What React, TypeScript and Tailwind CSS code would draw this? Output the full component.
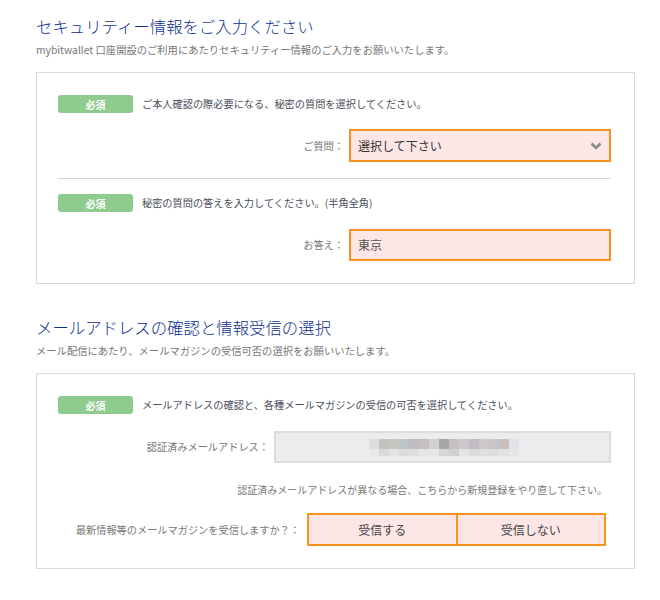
import React from 'react';

const FONT = "font-['Noto_Sans_CJK_JP','Noto_Sans',sans-serif]";

const MOSAIC_TOP = [
  '#e0dedb', '#c4c0c4', '#c8c6c0', '#bcc4c8', '#c0bcc0', '#c2bec2', '#d2d0cc', '#a8a6a8',
  '#c6c0c4', '#ccc8cc', '#c0bcc4', '#ccc8cc', '#c8c4c8', '#c9bfbd', '#dfe4e8',
];
const MOSAIC_BOTTOM = [
  '#e8e8e6', '#dad8da', '#e2e2e0', '#dcdcdc', '#dedddf', '#e6e6e4', '#e6e6e6', '#d8d6d8',
  '#cfcdd1', '#e4e4e2', '#dcdcdc', '#e0dee0', '#dcdcdc', '#e2e2e2', '#e4e6e8',
];

function Badge() {
  return (
    <span className="flex h-[18px] w-[75px] shrink-0 items-center justify-center rounded-[3px] bg-[#8fcb8e] text-[10px] font-bold text-white">
      必須
    </span>
  );
}

function RequiredRow({ text }: { text: string }) {
  return (
    <div className="flex h-[18px] items-center">
      <Badge />
      <span className="ml-[9px] text-[10.2px] leading-[16px] text-[#4a4e5a]">{text}</span>
    </div>
  );
}

function SectionHead({ title, sub }: { title: string; sub: string }) {
  return (
    <div>
      <h2 className="text-[16.4px] font-light leading-[24px] text-[#0d2f8f]">{title}</h2>
      <p className="mt-[4px] text-[10.3px] leading-[16px] text-[#777]">{sub}</p>
    </div>
  );
}

// blurred address, drawn as a mosaic
function Mosaic() {
  return (
    <svg width="150" height="17" viewBox="0 0 150 17">
      {MOSAIC_TOP.map((c, i) => (
        <rect key={`t${i}`} x={i * 10} y={0} width={10} height={10} fill={c} />
      ))}
      {MOSAIC_BOTTOM.map((c, i) => (
        <rect key={`b${i}`} x={i * 10} y={10} width={10} height={7} fill={c} />
      ))}
    </svg>
  );
}

export default function App() {
  return (
    <div className={`${FONT} min-h-[600px] w-[660px] bg-white pl-[36px] pr-[25px] pt-[14px]`}>
      <SectionHead
        title="セキュリティー情報をご入力ください"
        sub="mybitwallet 口座開設のご利用にあたりセキュリティー情報のご入力をお願いいたします。"
      />

      <div className="mt-[14px] border border-[#dadada] pb-[22px] pl-[21px] pr-[23px] pt-[22px]">
        <RequiredRow text="ご本人確認の際必要になる、秘密の質問を選択してください。" />
        <div className="mt-[16px] flex h-[33px] items-center justify-end gap-[5px]">
          <span className="text-[10.2px] text-[#777]">ご質問：</span>
          <div className="flex h-full w-[262px] items-center justify-between border-2 border-[#f7931e] bg-[#fde6e6] pl-[7px] pr-[7px]">
            <span className="text-[12px] text-[#333]">選択して下さい</span>
            <svg width="12" height="8" viewBox="0 0 12 8">
              <path d="M1.5 1.5 L6 6 L10.5 1.5" fill="none" stroke="#8a8a8a" strokeWidth="2.6" />
            </svg>
          </div>
        </div>
        <div className="mt-[16px] border-t border-[#d6d6d6]" />
        <div className="mt-[15px]">
          <RequiredRow text="秘密の質問の答えを入力してください。(半角全角)" />
        </div>
        <div className="mt-[17px] flex h-[32px] items-center justify-end gap-[5px]">
          <span className="text-[10.2px] text-[#777]">お答え：</span>
          <div className="flex h-full w-[262px] items-center border-2 border-[#f7931e] bg-[#fde6e6] pl-[7px]">
            <span className="text-[12px] text-[#555]">東京</span>
          </div>
        </div>
      </div>

      <div className="mt-[31px]">
        <SectionHead
          title="メールアドレスの確認と情報受信の選択"
          sub="メール配信にあたり、メールマガジンの受信可否の選択をお願いいたします。"
        />
      </div>

      <div className="mt-[14px] border border-[#dadada] pb-[22px] pl-[21px] pr-[23px] pt-[22px]">
        <RequiredRow text="メールアドレスの確認と、各種メールマガジンの受信の可否を選択してください。" />
        <div className="mt-[17px] flex h-[32px] items-center justify-end gap-[5px]">
          <span className="text-[10.2px] text-[#777]">認証済みメールアドレス：</span>
          <div className="flex h-full w-[337px] items-center border-2 border-[#dcdcdc] bg-[#ececec] pl-[93px]">
            <Mosaic />
          </div>
        </div>
        <p className="mr-[4px] mt-[19px] text-right text-[10px] leading-[16px] text-[#777]">
          認証済みメールアドレスが異なる場合、こちらから新規登録をやり直して下さい。
        </p>
        <div className="mr-[5px] mt-[15px] flex h-[33px] items-center justify-end gap-[7px]">
          <span className="text-[10.2px] text-[#777]">最新情報等のメールマガジンを受信しますか？：</span>
          <div className="flex h-full w-[299px] divide-x-2 divide-[#f7931e] border-2 border-[#f7931e] bg-[#fde6e6]">
            {['受信する', '受信しない'].map((t) => (
              <button key={t} className="flex flex-1 items-center justify-center text-[12px] text-[#444]">
                {t}
              </button>
            ))}
          </div>
        </div>
      </div>
    </div>
  );
}
